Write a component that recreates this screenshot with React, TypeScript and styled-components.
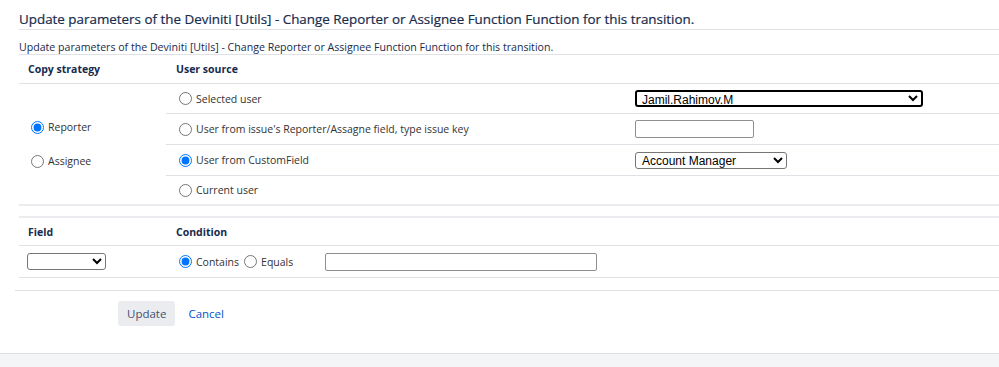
import React from "react";
import styled, { createGlobalStyle } from "styled-components";

const GlobalStyle = createGlobalStyle`
  html, body {
    margin: 0;
    padding: 0;
    background: #fff;
  }
  body {
    font-family: "Open Sans", "Noto Sans", sans-serif;
    color: #172b4d;
  }
  *, *::before, *::after {
    box-sizing: border-box;
  }
`;

const Page = styled.div`
  width: 999px;
  height: 367px;
  display: flex;
  flex-direction: column;
  overflow: hidden;
`;

const Main = styled.div`
  flex: 1;
  padding-left: 19px;
`;

const Heading = styled.h2`
  margin: 0;
  height: 30px;
  padding-top: 10px;
  font-size: 13.4px;
  font-weight: 400;
  line-height: 19px;
  color: #172b4d;
  -webkit-text-stroke: 0.2px #172b4d;
  border-bottom: 1px solid #dfe1e6;
`;

const Subtitle = styled.div`
  height: 25px;
  padding-top: 10px;
  font-size: 10.6px;
  line-height: 14px;
  color: #172b4d;
  border-bottom: 1px solid #dfe1e6;
`;

const Table = styled.div<{ $top?: boolean }>`
  font-size: 10.5px;
  color: #333;
  border-top: ${(p) => (p.$top ? "2px solid #ebecf0" : "none")};
  margin-top: ${(p) => (p.$top ? "10px" : "0")};
`;

const HeaderRow = styled.div<{ $h: number }>`
  display: flex;
  align-items: center;
  height: ${(p) => p.$h}px;
  border-bottom: 1px solid #dfe1e6;
  font-weight: 700;
  color: #172b4d;
`;

const FirstCol = styled.div`
  width: 147px;
  padding-left: 9px;
  flex-shrink: 0;
`;

const SecondCol = styled.div`
  width: 469px;
  padding-left: 10px;
  flex-shrink: 0;
`;

const Body = styled.div`
  display: flex;
  border-bottom: 2px solid #ebecf0;
`;

const StrategyCell = styled.div`
  width: 147px;
  flex-shrink: 0;
  display: flex;
  flex-direction: column;
  justify-content: center;
  gap: 20px;
  padding-left: 7px;
`;

const SourceRows = styled.div`
  flex: 1;
  display: flex;
  flex-direction: column;
`;

const SourceRow = styled.div<{ $h: number; $last?: boolean }>`
  display: flex;
  align-items: center;
  height: ${(p) => p.$h}px;
  border-bottom: ${(p) => (p.$last ? "none" : "1px solid #dfe1e6")};
`;

const LabelCell = styled.div`
  width: 469px;
  flex-shrink: 0;
  padding-left: 8px;
  display: flex;
  align-items: center;
`;

const ControlCell = styled.div`
  flex: 1;
  display: flex;
  align-items: center;
`;

const Choice = styled.label`
  display: inline-flex;
  align-items: center;
  cursor: pointer;
  white-space: nowrap;
`;

const Radio = styled.input.attrs({ type: "radio" })`
  width: 13px;
  height: 13px;
  margin: 0 4px 0 5px;
  accent-color: #0075ff;
`;

const Select = styled.select<{ $w: number; $focused?: boolean }>`
  width: ${(p) => p.$w}px;
  height: 17px;
  font-family: "Liberation Sans", Arial, sans-serif;
  font-size: 12px;
  line-height: 13px;
  color: #000;
  background: #fff;
  border: ${(p) => (p.$focused ? "2px solid #000" : "1px solid #767676")};
  border-radius: 3px;
  padding: 0 0 0 ${(p) => (p.$focused ? 1 : 2)}px;
  outline: none;
`;

const TextInput = styled.input.attrs({ type: "text" })<{ $w: number }>`
  width: ${(p) => p.$w}px;
  height: 18px;
  border: 1px solid #8f8f8f;
  border-radius: 2px;
  padding: 0 2px;
  font-family: "Liberation Sans", Arial, sans-serif;
  font-size: 12px;
`;

const BodyRow = styled.div`
  display: flex;
  align-items: center;
  height: 32px;
  border-bottom: 1px solid #dfe1e6;
`;

const FieldCell = styled.div`
  width: 147px;
  flex-shrink: 0;
  padding-left: 8px;
  display: flex;
  align-items: center;
`;

const ConditionCell = styled.div`
  display: flex;
  align-items: center;
  padding-left: 8px;
`;

const Gap = styled.span<{ $w: number }>`
  display: inline-block;
  width: ${(p) => p.$w}px;
`;

const Footer = styled.div`
  margin-top: 12px;
  margin-left: -4px;
  border-top: 1px solid #dfe1e6;
  padding: 10px 0 0 103px;
  display: flex;
  align-items: center;
  gap: 13px;
`;

const Button = styled.button`
  height: 25px;
  padding: 0 9px;
  border: none;
  border-radius: 3px;
  background: #ebecf0;
  color: #42526e;
  font-family: inherit;
  font-size: 11.5px;
`;

const LinkButton = styled.a`
  color: #0052cc;
  font-size: 11.5px;
  text-decoration: none;
  cursor: pointer;
`;

const Band = styled.div`
  height: 14px;
  flex-shrink: 0;
  background: #f4f5f7;
  border-top: 1px solid #dfe1e6;
`;

const sources = [
  { label: "Selected user", h: 30 },
  { label: "User from issue's Reporter/Assagne field, type issue key", h: 31 },
  { label: "User from CustomField", h: 31 },
  { label: "Current user", h: 28 },
];

export default function App() {
  return (
    <>
      <GlobalStyle />
      <Page>
        <Main>
          <Heading>
            Update parameters of the Deviniti [Utils] - Change Reporter or
            Assignee Function Function for this transition.
          </Heading>
          <Subtitle>
            Update parameters of the Deviniti [Utils] - Change Reporter or
            Assignee Function Function for this transition.
          </Subtitle>

          <Table>
            <HeaderRow $h={29}>
              <FirstCol>Copy strategy</FirstCol>
              <SecondCol>User source</SecondCol>
            </HeaderRow>
            <Body>
              <StrategyCell>
                <Choice>
                  <Radio name="strategy" defaultChecked />
                  Reporter
                </Choice>
                <Choice>
                  <Radio name="strategy" />
                  Assignee
                </Choice>
              </StrategyCell>
              <SourceRows>
                {sources.map((s, i) => (
                  <SourceRow key={s.label} $h={s.h} $last={i === sources.length - 1}>
                    <LabelCell>
                      <Choice>
                        <Radio name="source" defaultChecked={i === 2} />
                        {s.label}
                      </Choice>
                    </LabelCell>
                    <ControlCell>
                      {i === 0 && (
                        <Select $w={288} $focused defaultValue="jamil">
                          <option value="jamil">Jamil.Rahimov.M</option>
                        </Select>
                      )}
                      {i === 1 && <TextInput $w={119} />}
                      {i === 2 && (
                        <Select $w={152} defaultValue="am">
                          <option value="am">Account Manager</option>
                        </Select>
                      )}
                    </ControlCell>
                  </SourceRow>
                ))}
              </SourceRows>
            </Body>
          </Table>

          <Table $top>
            <HeaderRow $h={28}>
              <FirstCol>Field</FirstCol>
              <SecondCol>Condition</SecondCol>
            </HeaderRow>
            <BodyRow>
              <FieldCell>
                <Select $w={79} defaultValue="">
                  <option value=""></option>
                </Select>
              </FieldCell>
              <ConditionCell>
                <Choice>
                  <Radio name="condition" defaultChecked />
                  Contains
                </Choice>
                <Choice>
                  <Radio name="condition" />
                  Equals
                </Choice>
                <Gap $w={32} />
                <TextInput $w={272} />
              </ConditionCell>
            </BodyRow>
          </Table>

          <Footer>
            <Button>Update</Button>
            <LinkButton>Cancel</LinkButton>
          </Footer>
        </Main>
        <Band />
      </Page>
    </>
  );
}
